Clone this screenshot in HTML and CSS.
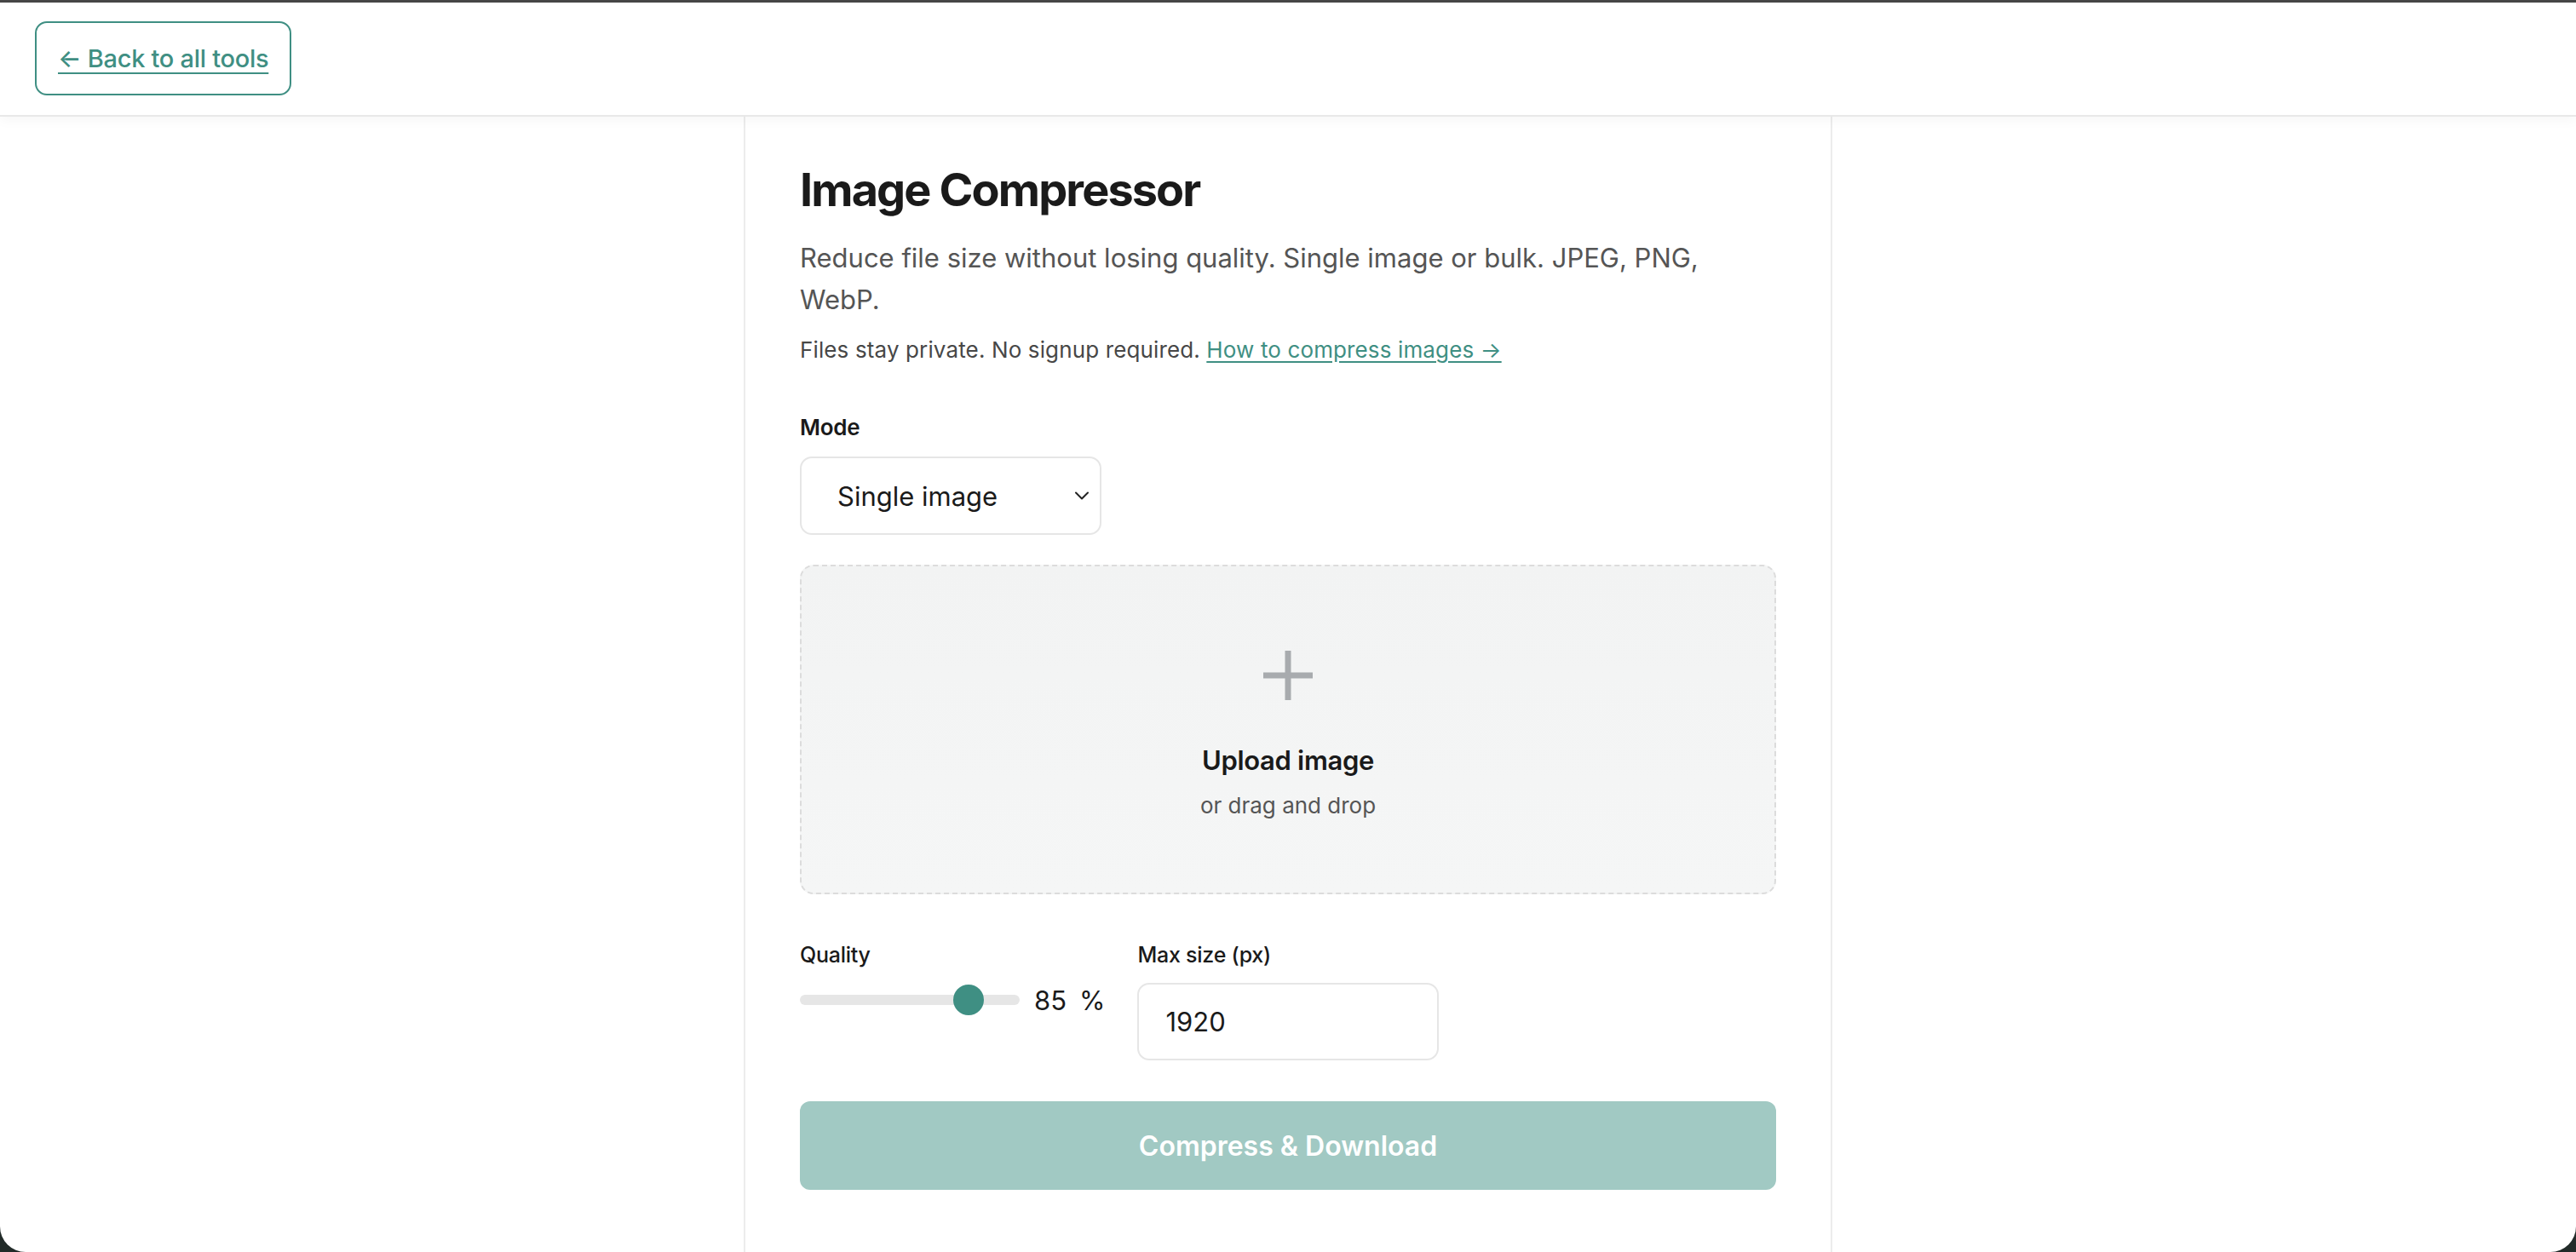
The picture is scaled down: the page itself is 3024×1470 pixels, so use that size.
FILE: index.html
```html
<!DOCTYPE html>
<html lang="en">

<head>
    <meta charset="UTF-8">
    <meta name="viewport" content="width=device-width, initial-scale=1.0">
    <title>Image Compressor</title>
    <link rel="stylesheet" href="styles.css">
</head>

<body>
    <header class="topbar">
        <a class="back-link" href="#">← Back to all tools</a>
    </header>

    <main class="tool">
        <h1 class="tool-title">Image Compressor</h1>
        <p class="tool-desc">Reduce file size without losing quality. Single image or bulk. JPEG, PNG, WebP.</p>
        <p class="tool-note">Files stay private. No signup required. <a href="#">How to compress images →</a></p>

        <label class="field-label" for="mode">Mode</label>
        <div class="select-wrap">
            <select id="mode" class="select">
                <option>Single image</option>
                <option>Bulk</option>
            </select>
            <svg class="chevron" width="18" height="10" viewBox="0 0 18 10" fill="none" stroke="#222" stroke-width="2" stroke-linecap="round" stroke-linejoin="round"><path d="M2 1.5l7 7 7-7"/></svg>
        </div>

        <div class="dropzone">
            <svg class="plus" width="58" height="58" viewBox="0 0 58 58" fill="none" stroke="#a8abae" stroke-width="7"><path d="M29 0v58M0 29h58"/></svg>
            <div class="drop-title">Upload image</div>
            <div class="drop-sub">or drag and drop</div>
        </div>

        <div class="options">
            <div class="option">
                <label class="field-label small" for="quality">Quality</label>
                <div class="quality-row">
                    <input id="quality" class="range" type="range" min="20" max="100" value="85">
                    <span class="quality-val">85</span>
                    <span class="quality-unit">%</span>
                </div>
            </div>
            <div class="option">
                <label class="field-label small" for="maxsize">Max size (px)</label>
                <input id="maxsize" class="text-input" type="text" value="1920">
            </div>
        </div>

        <button class="submit" disabled>Compress &amp; Download</button>
    </main>
</body>

</html>
```

FILE: styles.css
```css
* {
    padding: 0;
    margin: 0;
    box-sizing: border-box;
    font-family: Inter, 'Noto Sans', sans-serif;
}

:root {
    --teal: #3f8f83;
    --teal-soft: #a1c9c3;
    --border: #e6e6e6;
    --text: #1a1a1a;
    --muted: #555555;
}

html {
    background: #222b29;
}

body {
    height: 100vh;
    overflow: hidden;
    display: flex;
    flex-direction: column;
    background: #ffffff;
    border-top: 3px solid #464646;
    border-radius: 0 0 30px 30px;
    color: var(--text);
}

.topbar {
    flex-shrink: 0;
    height: 134px;
    display: flex;
    align-items: center;
    padding-left: 41px;
    padding-bottom: 2px;
    background: #ffffff;
    border-bottom: 2px solid #e8e8e8;
    box-shadow: 0 4px 14px rgba(0, 0, 0, .04);
    position: relative;
    z-index: 2;
}

.back-link {
    display: flex;
    align-items: center;
    height: 87px;
    padding: 0 25px;
    border: 2px solid var(--teal);
    border-radius: 14px;
    color: var(--teal);
    font-size: 29px;
    font-weight: 500;
    letter-spacing: -0.01em;
    text-decoration: underline;
    text-underline-offset: 6px;
    text-decoration-thickness: 2px;
}

.tool {
    flex: 1;
    min-height: 0;
    overflow: hidden;
    width: 1278px;
    margin: 0 auto;
    padding: 53px 64px 0;
    border-left: 2px solid #ececec;
    border-right: 2px solid #ececec;
    display: flex;
    flex-direction: column;
    align-items: flex-start;
}

.tool-title {
    font-size: 54px;
    font-weight: 700;
    line-height: 65px;
    letter-spacing: -0.035em;
}

.tool-desc {
    max-width: 1100px;
    margin-top: 23px;
    font-size: 31px;
    line-height: 49px;
    color: var(--muted);
}

.tool-note {
    margin-top: 16px;
    font-size: 26px;
    line-height: 37px;
    color: #474747;
    letter-spacing: 0.005em;
}

.tool-note a {
    color: var(--teal);
    text-decoration: underline;
    text-underline-offset: 4px;
}

.field-label {
    margin-top: 55px;
    font-size: 26px;
    line-height: 36px;
    font-weight: 600;
    letter-spacing: -0.01em;
}

.field-label.small {
    margin-top: 0;
    font-size: 25px;
    line-height: 35px;
    font-weight: 500;
}

.select-wrap {
    position: relative;
    margin-top: 16px;
}

.select {
    -webkit-appearance: none;
    appearance: none;
    width: 354px;
    height: 92px;
    padding: 0 42px;
    border: 2px solid var(--border);
    border-radius: 14px;
    background: #ffffff;
    font-size: 31px;
    color: var(--text);
    outline: 0;
}

.chevron {
    position: absolute;
    right: 14px;
    top: 41px;
    pointer-events: none;
}

.dropzone {
    flex-shrink: 0;
    margin-top: 35px;
    width: 100%;
    height: 387px;
    border: 2px dashed #dcdcdc;
    border-radius: 16px;
    background: linear-gradient(#f2f3f3, #f5f6f6);
    display: flex;
    flex-direction: column;
    align-items: center;
    justify-content: center;
    padding-top: 14px;
}

.drop-title {
    margin-top: 51px;
    font-size: 31px;
    line-height: 39px;
    font-weight: 600;
    letter-spacing: -0.01em;
}

.drop-sub {
    margin-top: 15px;
    font-size: 26px;
    line-height: 37px;
    color: var(--muted);
}

.options {
    margin-top: 54px;
    display: flex;
    gap: 38px;
}

.option {
    display: flex;
    flex-direction: column;
    gap: 15px;
}

.quality-row {
    display: flex;
    align-items: center;
    height: 40px;
}

.range {
    -webkit-appearance: none;
    appearance: none;
    width: 258px;
    height: 12px;
    border-radius: 6px;
    background: #e6e6e6;
    outline: 0;
}

.range::-webkit-slider-thumb {
    -webkit-appearance: none;
    width: 36px;
    height: 36px;
    border-radius: 50%;
    background: var(--teal);
    border: 0;
}

.quality-val {
    margin-left: 17px;
    font-size: 31px;
}

.quality-unit {
    margin-left: 15px;
    font-size: 31px;
}

.text-input {
    width: 354px;
    height: 91px;
    padding: 0 31px;
    border: 2px solid var(--border);
    border-radius: 14px;
    font-size: 31px;
    color: var(--text);
    outline: 0;
}

.submit {
    flex-shrink: 0;
    margin-top: 48px;
    width: 100%;
    height: 104px;
    border: 0;
    border-radius: 12px;
    background: var(--teal-soft);
    color: #ffffff;
    font-size: 32px;
    font-weight: 600;
}
```
